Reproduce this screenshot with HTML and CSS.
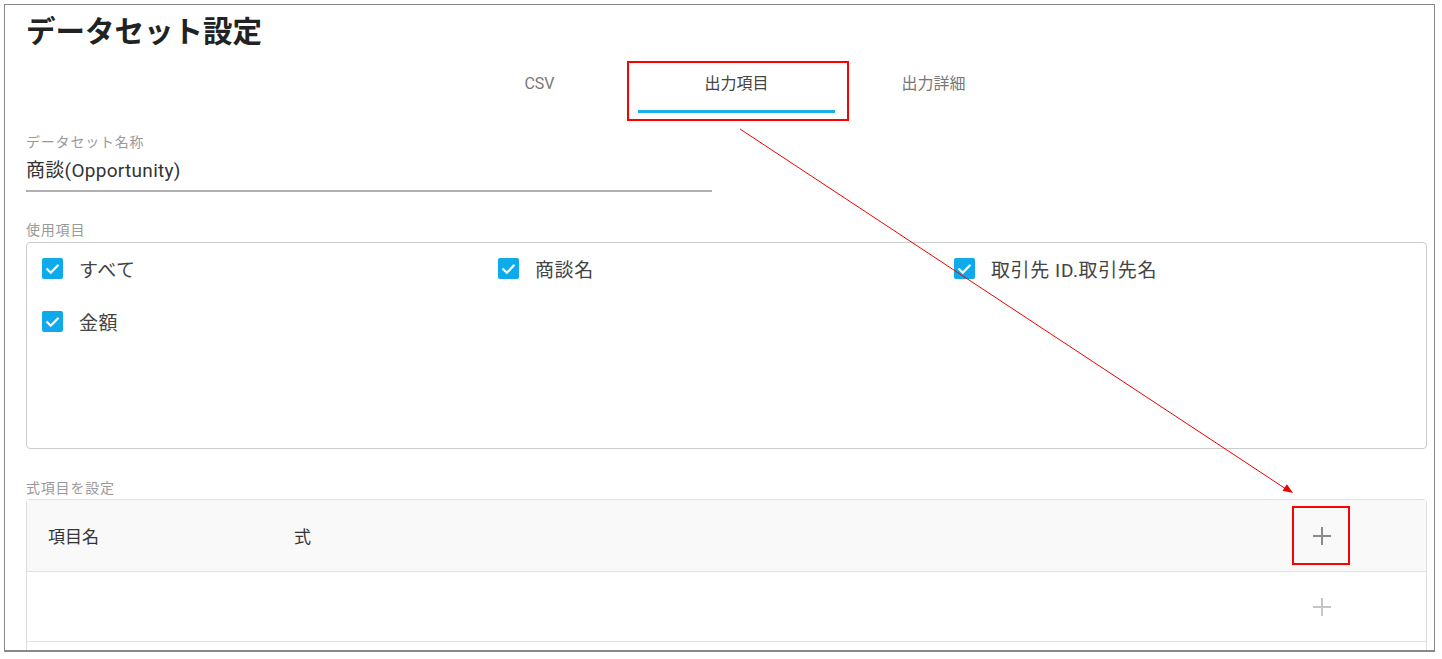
FILE: index.html
```html
<!DOCTYPE html>
<html lang="ja">
<head>
    <meta charset="UTF-8">
    <title>データセット設定</title>
    <link rel="stylesheet" href="styles.css">
</head>
<body>
    <div class="frame">
        <h1 class="title">データセット設定</h1>

        <!-- tabs -->
        <div class="tabs">
            <div class="tab">CSV</div>
            <div class="tab active">出力項目</div>
            <div class="tab">出力詳細</div>
        </div>

        <!-- dataset name -->
        <div class="field">
            <div class="label">データセット名称</div>
            <div class="field-value">商談(Opportunity)</div>
        </div>

        <!-- used items -->
        <div class="label section-label">使用項目</div>
        <div class="check-box">
            <label class="check"><span class="mark"><svg viewBox="0 0 21 21" width="21" height="21"><rect width="21" height="21" rx="2" fill="#0eaaeb"/><path d="M4.5 10.5 L8.8 14.8 L16.5 6.8" fill="none" stroke="#fff" stroke-width="2.2"/></svg></span>すべて</label>
            <label class="check"><span class="mark"><svg viewBox="0 0 21 21" width="21" height="21"><rect width="21" height="21" rx="2" fill="#0eaaeb"/><path d="M4.5 10.5 L8.8 14.8 L16.5 6.8" fill="none" stroke="#fff" stroke-width="2.2"/></svg></span>商談名</label>
            <label class="check"><span class="mark"><svg viewBox="0 0 21 21" width="21" height="21"><rect width="21" height="21" rx="2" fill="#0eaaeb"/><path d="M4.5 10.5 L8.8 14.8 L16.5 6.8" fill="none" stroke="#fff" stroke-width="2.2"/></svg></span>取引先 ID.取引先名</label>
            <label class="check"><span class="mark"><svg viewBox="0 0 21 21" width="21" height="21"><rect width="21" height="21" rx="2" fill="#0eaaeb"/><path d="M4.5 10.5 L8.8 14.8 L16.5 6.8" fill="none" stroke="#fff" stroke-width="2.2"/></svg></span>金額</label>
        </div>

        <!-- formula items -->
        <div class="label formula-label">式項目を設定</div>
        <div class="formula-table">
            <div class="row head">
                <div class="col-name">項目名</div>
                <div class="col-expr">式</div>
                <div class="col-add"><svg class="plus" viewBox="0 0 20 20" width="20" height="20"><path d="M10 1 V19 M1 10 H19" stroke="#8a8a8a" stroke-width="2"/></svg></div>
            </div>
            <div class="row">
                <div class="col-name"></div>
                <div class="col-expr"></div>
                <div class="col-add"><svg class="plus" viewBox="0 0 20 20" width="20" height="20"><path d="M10 1 V19 M1 10 H19" stroke="#c6c6c6" stroke-width="2"/></svg></div>
            </div>
            <div class="row"></div>
        </div>

        <!-- annotation boxes -->
        <div class="mark-box tab-mark"></div>
        <div class="mark-box add-mark"></div>
    </div>

    <svg class="arrow" width="1442" height="659" viewBox="0 0 1442 659">
        <line x1="740" y1="129" x2="1286" y2="489" stroke="#e00" stroke-width="1"/>
        <polygon points="1293,493 1282.5,490.8 1286.9,484.2" fill="#e00"/>
    </svg>
</body>
</html>
```

FILE: styles.css
```css
body {
    margin: 0;
    background: #fff;
    font-family: Roboto, "Noto Sans CJK JP", sans-serif;
    color: #333;
}
.frame {
    position: relative;
    margin: 4px 7px 0 4px;
    height: 645px;
    border: 1px solid #888;
    border-bottom-width: 2px;
    padding: 0 7px 0 21px;
    overflow: hidden;
}
.title {
    margin: 6px 0 0;
    font-family: "Noto Sans CJK JP", sans-serif;
    font-size: 29.5px;
    line-height: 36px;
    font-weight: 700;
    color: #222;
}
.tabs {
    display: flex;
    margin: 13px 0 0 415px;
}
.tab {
    width: 197px;
    padding: 14px 0 16px;
    line-height: 20px;
    font-size: 16px;
    text-align: center;
    color: #777;
    border-bottom: 3px solid transparent;
}
.tab.active {
    color: #444;
    border-bottom-color: #1ab0ee;
}
.label {
    font-size: 14px;
    line-height: 18px;
    color: #999;
    letter-spacing: 0.8px;
}
.field {
    width: 686px;
    margin-top: 20px;
    border-bottom: 2px solid #b0b0b0;
    padding-bottom: 6px;
}
.field-value {
    margin-top: 7px;
    font-size: 19px;
    line-height: 26px;
    color: #333;
    letter-spacing: 0.3px;
}
.section-label {
    margin-top: 29px;
}
.check-box {
    margin-top: 3px;
    height: 207px;
    border: 1px solid #ccc;
    border-radius: 4px;
    padding: 10px 16px 0 15px;
    box-sizing: border-box;
    display: grid;
    grid-template-columns: repeat(3, 1fr);
    grid-auto-rows: 30px;
    row-gap: 23px;
    align-content: start;
}
.check {
    display: flex;
    align-items: center;
    font-size: 19px;
    color: #444;
    letter-spacing: 0.6px;
}
.mark {
    display: flex;
    margin-right: 16px;
}
.formula-label {
    margin-top: 30px;
}
.formula-table {
    margin-top: 2px;
    border: 1px solid #ddd;
    border-radius: 4px 4px 0 0;
}
.row {
    display: flex;
    align-items: center;
    height: 69px;
    border-bottom: 1px solid #e2e2e2;
    font-size: 17px;
    color: #333;
}
.row.head {
    height: 71px;
    background: #f9f9f9;
}
.col-name {
    width: 246px;
    padding-left: 21px;
}
.col-expr {
    flex: 1;
}
.col-add {
    width: 208px;
    display: flex;
    justify-content: center;
}
.mark-box {
    position: absolute;
    border: 2px solid #f00;
    box-sizing: border-box;
}
.tab-mark {
    left: 622px;
    top: 56px;
    width: 222px;
    height: 60px;
}
.add-mark {
    left: 1287px;
    top: 501px;
    width: 58px;
    height: 59px;
}
.arrow {
    position: absolute;
    top: 0;
    left: 0;
    pointer-events: none;
}
```
